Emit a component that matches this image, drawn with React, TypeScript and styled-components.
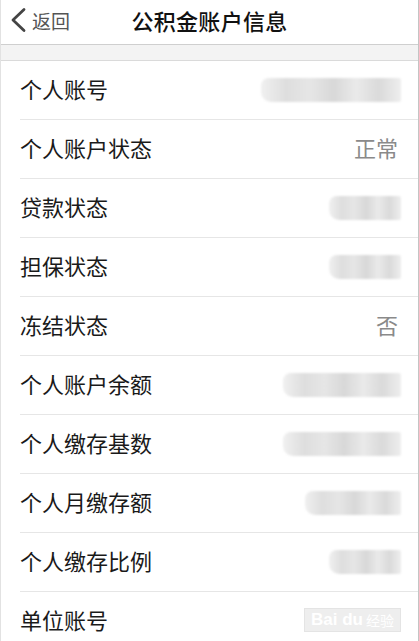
import styled, { createGlobalStyle } from "styled-components";

const GlobalStyle = createGlobalStyle`
  html, body {
    margin: 0;
    padding: 0;
    background: #ffffff;
  }
  body {
    font-family: "Noto Sans CJK SC", "Noto Sans", sans-serif;
  }
`;

const Page = styled.div`
  width: 417px;
  height: 641px;
  overflow: hidden;
  background: #ffffff;
  border-left: 1px solid #e2e2e2;
  border-right: 1px solid #c4c4c4;
`;

const NavBar = styled.div`
  position: relative;
  height: 44px;
  display: flex;
  align-items: center;
  justify-content: center;
  border-bottom: 1px solid #cfcfcf;
`;

const BackButton = styled.div`
  position: absolute;
  left: 8px;
  top: 0;
  height: 40px;
  display: flex;
  align-items: center;
  gap: 5px;
  color: #555555;
  font-size: 19px;
`;

const Title = styled.div`
  font-size: 22px;
  font-weight: 500;
  color: #111111;
  letter-spacing: 0.3px;
  padding-bottom: 4px;
`;

const Band = styled.div`
  height: 15px;
  background: #f3f3f3;
  border-bottom: 1px solid #dadada;
`;

const List = styled.div`
  display: flex;
  flex-direction: column;
`;

const Row = styled.div`
  position: relative;
  height: 54px;
  padding-bottom: 4px;
  margin-left: 19px;
  padding-right: 20px;
  display: flex;
  align-items: center;
  justify-content: space-between;
  border-bottom: 1px solid #e6e6e6;
`;

const Label = styled.span`
  font-size: 22px;
  color: #1a1a1a;
`;

const Value = styled.span`
  font-size: 22px;
  color: #8a8a8a;
`;

const Blur = styled.div<{ w: number }>`
  width: ${(p) => p.w}px;
  height: 24px;
  margin-right: -3px;
  margin-top: 4px;
  background: linear-gradient(
    90deg,
    #f0f0f0 0%,
    #dedede 18%,
    #e6e6e6 35%,
    #d8d8d8 52%,
    #eaeaea 68%,
    #dadada 84%,
    #eeeeee 100%
  );
  filter: blur(1.2px);
  border-radius: 8px 2px 2px 10px;
`;

const Watermark = styled.div`
  position: absolute;
  right: 18px;
  top: 17px;
  display: flex;
  align-items: center;
  gap: 3px;
  padding: 1px 6px;
  background: #eeeeee;
  color: #ffffff;
  font-family: "Liberation Sans", sans-serif;
  font-size: 17px;
  font-weight: bold;
  box-shadow: 0 0 0 1px #e4e4e4;
`;

const WatermarkCn = styled.span`
  font-family: "Noto Sans CJK SC", sans-serif;
  font-size: 14px;
  font-weight: normal;
`;

type Item = { label: string; value?: string; blur?: number };

const items: Item[] = [
  { label: "个人账号", blur: 140 },
  { label: "个人账户状态", value: "正常" },
  { label: "贷款状态", blur: 72 },
  { label: "担保状态", blur: 72 },
  { label: "冻结状态", value: "否" },
  { label: "个人账户余额", blur: 118 },
  { label: "个人缴存基数", blur: 118 },
  { label: "个人月缴存额", blur: 96 },
  { label: "个人缴存比例", blur: 72 },
  { label: "单位账号" },
];

const App = () => {
  return (
    <>
      <GlobalStyle />
      <Page>
        <NavBar>
          <BackButton>
            <svg width="18" height="26" viewBox="0 0 18 26">
              <path
                d="M15 2.5 L4 13 L15 23.5"
                fill="none"
                stroke="#444444"
                strokeWidth="2.8"
                strokeLinecap="round"
                strokeLinejoin="round"
              />
            </svg>
            返回
          </BackButton>
          <Title>公积金账户信息</Title>
        </NavBar>
        <Band />
        <List>
          {items.map((item) => (
            <Row key={item.label}>
              <Label>{item.label}</Label>
              {item.value && <Value>{item.value}</Value>}
              {item.blur && <Blur w={item.blur} />}
              {item.label === "单位账号" && (
                <Watermark>
                  Bai du<WatermarkCn>经验</WatermarkCn>
                </Watermark>
              )}
            </Row>
          ))}
        </List>
      </Page>
    </>
  );
};

export default App;
